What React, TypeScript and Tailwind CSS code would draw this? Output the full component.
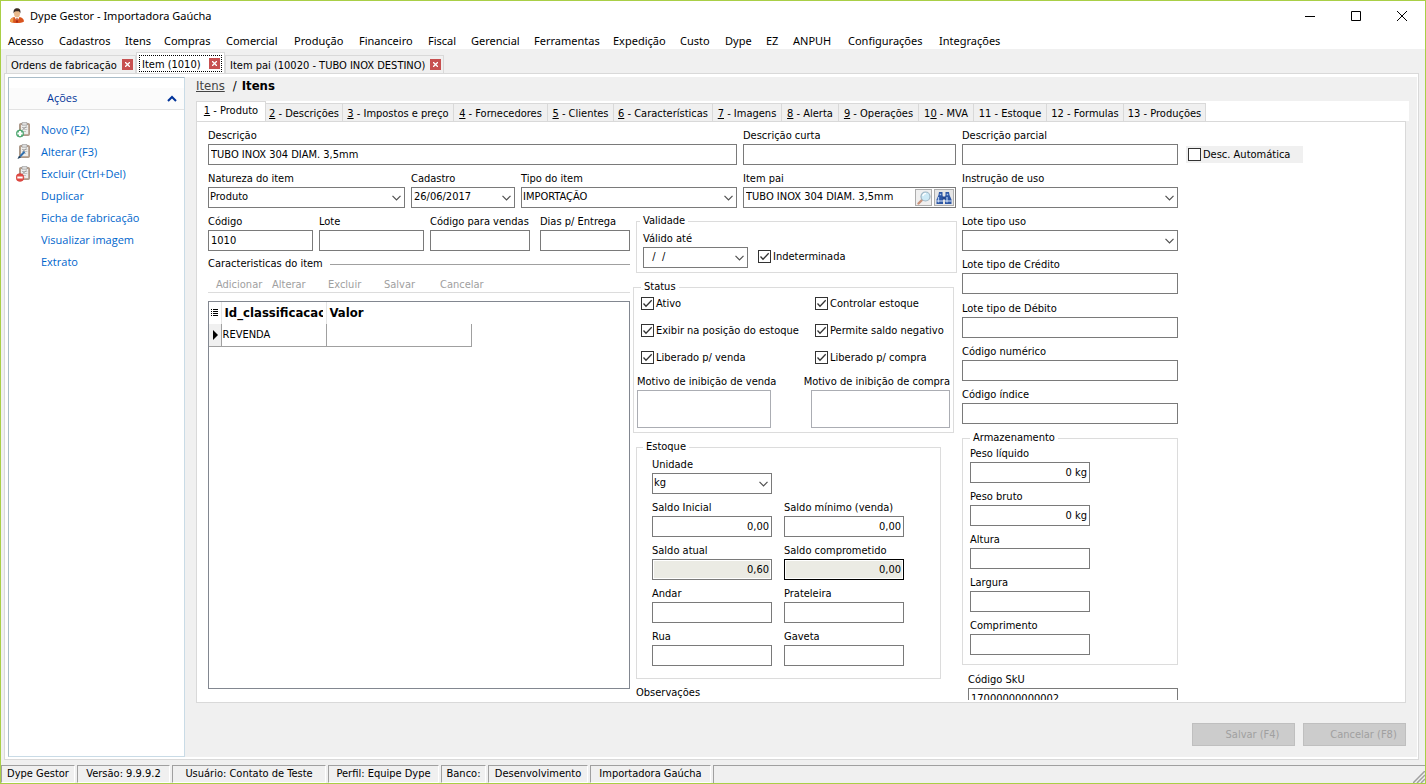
import { useId, type ReactNode } from "react";

const menus = [
  { label: "Acesso", width: "w-[51px]" },
  { label: "Cadastros", width: "w-[66px]" },
  { label: "Itens", width: "w-[39px]" },
  { label: "Compras", width: "w-[62px]" },
  { label: "Comercial", width: "w-[68px]" },
  { label: "Produção", width: "w-[65px]" },
  { label: "Financeiro", width: "w-[69px]" },
  { label: "Fiscal", width: "w-[43px]" },
  { label: "Gerencial", width: "w-[63px]" },
  { label: "Ferramentas", width: "w-[79px]" },
  { label: "Expedição", width: "w-[67px]" },
  { label: "Custo", width: "w-[45px]" },
  { label: "Dype", width: "w-[41px]" },
  { label: "EZ", width: "w-[27px]" },
  { label: "ANPUH", width: "w-[55px]" },
  { label: "Configurações", width: "w-[91px]" },
  { label: "Integrações", width: "w-[80px]" },
];

// pre + key: the underlined accelerator of each tab
const sections = [
  { pre: "", key: "1", rest: " - Produto", width: "w-[70px]" },
  { pre: "", key: "2", rest: " - Descrições", width: "w-[77px]" },
  { pre: "", key: "3", rest: " - Impostos e preço", width: "w-[111px]" },
  { pre: "", key: "4", rest: " - Fornecedores", width: "w-[94px]" },
  { pre: "", key: "5", rest: " - Clientes", width: "w-[66px]" },
  { pre: "", key: "6", rest: " - Características", width: "w-[99px]" },
  { pre: "", key: "7", rest: " - Imagens", width: "w-[69px]" },
  { pre: "", key: "8", rest: " - Alerta", width: "w-[57px]" },
  { pre: "", key: "9", rest: " - Operações", width: "w-[80px]" },
  { pre: "1", key: "0", rest: " - MVA", width: "w-[55px]" },
  { pre: "11", key: "", rest: " - Estoque", width: "w-[73px]" },
  { pre: "12", key: "", rest: " - Formulas", width: "w-[77px]" },
  { pre: "13", key: "", rest: " - Produções", width: "w-[82px]" },
];

const statusCells = [
  { text: "Dype Gestor", width: "w-[74px]" },
  { text: "Versão: 9.9.9.2", width: "w-[93px]" },
  { text: "Usuário: Contato de Teste", width: "w-[154px]" },
  { text: "Perfil: Equipe Dype", width: "w-[111px]" },
  { text: "Banco:", width: "w-[45px]" },
  { text: "Desenvolvimento", width: "w-[100px]" },
  { text: "Importadora Gaúcha", width: "w-[121px]" },
];

function Chevron() {
  return (
    <svg width="9" height="6" viewBox="0 0 9 6" fill="none" stroke="#505050" strokeWidth="1.2">
      <path d="M0.5 0.8 4.5 4.8 8.5 0.8" />
    </svg>
  );
}

function AppIcon() {
  return (
    <svg width="16" height="16" viewBox="0 0 16 16">
      <path d="M1 13.500C1 11 3 9.500 5.500 9L10.500 9C13 9.500 15 11 15 13.500 12 15.500 4 15.500 1 13.500Z" fill="#d9541e" />
      <path d="M1 13.500C1 11.500 2.500 10 4.500 9.500L4 14.800Q2 14.300 1 13.500Z" fill="#f0a04a" />
      <path d="M5.500 9 8 13.500 10.500 9Z" fill="#fff" />
      <path d="M7.500 10h1l.6 4-1.100 1-1.100-1Z" fill="#b02a10" />
      <ellipse cx="8" cy="5.500" rx="3" ry="4" fill="#e9b98c" />
      <path d="M4.700 5.500C4 1.500 6 .2 8.200.2 10.800.2 12 2 11.300 5.500 10.800 3.500 10 3 8 3.200 6 3.200 5.200 3.500 4.700 5.500Z" fill="#3a2a22" />
    </svg>
  );
}

function ClipboardIcon({ kind }: { kind: "add" | "edit" | "remove" }) {
  return (
    <svg width="16" height="16" viewBox="0 0 16 16">
      <rect x="3.500" y="1.500" width="10" height="12" rx="1" fill="#b39c8b" stroke="#a18b7a" strokeWidth=".8" />
      <path d="M5 3h7.200v9.200H5z" fill="#eeeeec" />
      <path d="M6 .6h5v2.600H6z" fill="#e4e4e4" stroke="#9b9b9b" strokeWidth=".7" />
      <path d="M6 5.500h5.300M6 7.500h5.300M6 9.500h4" stroke="#bdbdbd" strokeWidth=".9" />
      <path d="m6.800 5.400 1 1.400 2.700-2.400" stroke="#8a8a8a" strokeWidth=".8" fill="none" />
      {kind === "add" && (
        <>
          <circle cx="4" cy="11.500" r="3.600" fill="#5fb37f" stroke="#3c9a62" strokeWidth=".8" />
          <path d="M4 8.900v5.200M1.400 11.500h5.200" stroke="#fff" strokeWidth="2" />
        </>
      )}
      {kind === "edit" && (
        <>
          <path d="M3 13.500 4.500 10.500 7.800 7 9.300 8.300 5.500 12.500Z" fill="#2f6fae" />
          <path d="M1.500 15 3 11.800 5 13.600Z" fill="#1c3c5c" />
        </>
      )}
      {kind === "remove" && (
        <>
          <circle cx="4" cy="11.500" r="3.900" fill="#e24b44" stroke="#cf3a34" strokeWidth=".5" />
          <path d="M1.300 11.500h5.400" stroke="#fff" strokeWidth="2" />
        </>
      )}
    </svg>
  );
}

function MagnifierIcon() {
  return (
    <svg width="14" height="14" viewBox="0 0 14 14">
      <path d="M1.500 12.500 5 9" stroke="#c9937c" strokeWidth="2.400" strokeLinecap="round" />
      <circle cx="8.500" cy="5.500" r="4.500" fill="#cdeaf6" stroke="#9fb6c4" strokeWidth="1.200" />
      <path d="M5.800 5C6.200 3.200 7.600 2.400 9 2.600" stroke="#fff" strokeWidth="1.200" fill="none" />
    </svg>
  );
}

function BinocularsIcon() {
  return (
    <svg width="16" height="14" viewBox="0 0 16 14">
      <path d="M3 1h3.500v3L7 6v7H.5V8.500L2.500 4Z" fill="#2d57a5" />
      <path d="M13 1H9.500v3L9 6v7h6.500V8.500L13.500 4Z" fill="#2d57a5" />
      <path d="M6.500 5.500h3v3h-3z" fill="#24468c" />
      <path d="M3.700 3.500h1.500M10.700 3.500h1.500M2.500 6v5.500M11 6v5.500" stroke="#a9c6f0" strokeWidth="1.300" />
      <path d="M.5 10h6.500M9 10h6.500" stroke="#dfe9f8" strokeWidth="1" />
    </svg>
  );
}

type FieldProps = {
  label: string;
  width: string;
  value?: string;
  right?: boolean;
  readOnly?: boolean;
  dark?: boolean;
};

function TextField({ label, width, value = "", right, readOnly, dark }: FieldProps) {
  const id = useId();
  return (
    <div className={width}>
      <label htmlFor={id} className="block whitespace-nowrap leading-[16px]">
        {label}
      </label>
      <input
        id={id}
        defaultValue={value}
        readOnly={readOnly}
        className={`block h-[21px] w-full border px-[2px] ${dark ? "border-black" : "border-[#7a7a7a]"} ${
          right ? "text-right" : ""
        } ${readOnly ? "bg-[#ebebe4] shadow-[inset_0_0_0_1px_#fff]" : "bg-white"}`}
      />
    </div>
  );
}

function SelectField({ label, width, value = "" }: FieldProps) {
  const id = useId();
  return (
    <div className={width}>
      <label htmlFor={id} className="block whitespace-nowrap leading-[16px]">
        {label}
      </label>
      <div className="relative">
        <select
          id={id}
          defaultValue={value}
          className="block h-[21px] w-full appearance-none border border-[#7a7a7a] bg-white px-[1px]"
        >
          <option>{value}</option>
        </select>
        <span className="pointer-events-none absolute right-[4px] top-[8px]">
          <Chevron />
        </span>
      </div>
    </div>
  );
}

function DateField({ label, width, value = "" }: FieldProps) {
  const id = useId();
  return (
    <div className={width}>
      <label htmlFor={id} className="block whitespace-nowrap leading-[16px]">
        {label}
      </label>
      <div className="flex h-[21px] items-center border border-[#7a7a7a] bg-white">
        <input id={id} defaultValue={value} className="w-0 flex-1 whitespace-pre px-[2px] outline-none" />
        <button type="button" aria-label="Abrir calendário" className="px-[3px]">
          <Chevron />
        </button>
      </div>
    </div>
  );
}

function Check({ label, checked = false }: { label: string; checked?: boolean }) {
  return (
    <label className="flex h-[13px] items-center gap-[2px] whitespace-nowrap leading-[14px]">
      <span className="relative block size-[13px]">
        <input
          type="checkbox"
          defaultChecked={checked}
          className="peer block size-[13px] appearance-none border border-[#333] bg-white"
        />
        <svg
          viewBox="0 0 13 13"
          className="pointer-events-none absolute inset-0 hidden size-[13px] peer-checked:block"
          fill="none"
          stroke="#333"
          strokeWidth="1.300"
        >
          <path d="M2.500 6.500 5 9.200 10.700 3.300" />
        </svg>
      </span>
      {label}
    </label>
  );
}

function Group({ title, className, children }: { title: string; className: string; children: ReactNode }) {
  return (
    <fieldset className={`border border-[#dcdcdc] ${className}`}>
      <legend className="px-[3px] leading-[14px]">{title}</legend>
      {children}
    </fieldset>
  );
}

function DocumentTab({ label, width, active = false }: { label: string; width: string; active?: boolean }) {
  return (
    <div
      className={`flex border border-b-0 border-[#d9d9d9] ${width} ${
        active ? "h-[21px] bg-white px-[2px] pb-px pt-[2px]" : "h-[18px] bg-[#f0f0f0] px-px"
      }`}
    >
      <div
        className={`flex flex-1 items-center justify-between ${
          active ? "border border-dotted border-black pl-[2px] pr-px" : "pl-[3px] pr-px"
        }`}
      >
        <button type="button" className="whitespace-nowrap pt-[2px] leading-[14px]">
          {label}
        </button>
        <button
          type="button"
          aria-label={`Fechar ${label}`}
          className="flex size-[11px] items-center justify-center bg-[#c75050]"
        >
          <svg width="5" height="5" viewBox="0 0 5 5" stroke="#fff" strokeWidth="1.300">
            <path d="M0 0 5 5M5 0 0 5" />
          </svg>
        </button>
      </div>
    </div>
  );
}

function Sidebar() {
  const actions: { label: string; icon?: "add" | "edit" | "remove" }[] = [
    { label: "Novo (F2)", icon: "add" },
    { label: "Alterar (F3)", icon: "edit" },
    { label: "Excluir (Ctrl+Del)", icon: "remove" },
    { label: "Duplicar" },
    { label: "Ficha de fabricação" },
    { label: "Visualizar imagem" },
    { label: "Extrato" },
  ];
  return (
    <aside className="w-[177px] shrink-0 border border-[#a9bcc8] border-b-[#c9dbe6] border-r-[#c9dbe6] bg-white font-['Open_Sans','Noto_Sans',sans-serif] text-[11px]">
      <button
        type="button"
        className="mt-[10px] flex h-[22px] w-full items-center justify-between border-b border-[#e3e3e3] bg-[#fbfbfb] pl-[38px] pr-[7px] text-[#003399]"
      >
        Ações
        <svg width="10" height="7" viewBox="0 0 10 7" fill="none" stroke="#003399" strokeWidth="2">
          <path d="M1 6 5 2 9 6" />
        </svg>
      </button>
      <ul className="pt-[9px]">
        {actions.map((a) => (
          <li key={a.label}>
            <a href="#" className="flex h-[22px] items-center gap-[9px] pl-[7px] text-[#0066cc]">
              <span className="size-[16px]">{a.icon && <ClipboardIcon kind={a.icon} />}</span>
              {a.label}
            </a>
          </li>
        ))}
      </ul>
    </aside>
  );
}

function Characteristics() {
  return (
    <div>
      <div className="flex items-center gap-[7px] leading-[14px]">
        Caracteristicas do item
        <span className="h-px flex-1 bg-[#a0a0a0]" />
      </div>
      <div className="mt-[6px] flex h-[16px] border-b border-[#dcdcdc] pl-[8px] text-[#a0a0a0]">
        <button type="button" disabled className="w-[56px] text-left">Adicionar</button>
        <button type="button" disabled className="w-[56px] text-left">Alterar</button>
        <button type="button" disabled className="w-[56px] text-left">Excluir</button>
        <button type="button" disabled className="w-[56px] text-left">Salvar</button>
        <button type="button" disabled className="w-[56px] text-left">Cancelar</button>
      </div>
      <div className="mt-[8px] h-[388px] border border-[#828790]">
        <table className="w-[263px] table-fixed border-collapse">
          <thead>
            <tr className="h-[22px] text-left text-[13px]">
              <th className="w-[12px] border-r border-[#e5e5e5]">
                <svg width="8" height="10" viewBox="0 0 8 10" stroke="#000" className="ml-[2px]">
                  <path d="M0 1.500h1M2 1.500h5M0 3.500h1M2 3.500h5M0 5.500h1M2 5.500h5M0 7.500h1M2 7.500h5" />
                </svg>
              </th>
              <th className="w-[105px] border-r border-[#e5e5e5] pl-[3px] pr-[3px]">
                <span className="block overflow-hidden whitespace-nowrap">Id_classificacao</span>
              </th>
              <th className="pl-[3px]">Valor</th>
            </tr>
          </thead>
          <tbody>
            <tr className="h-[22px]">
              <td className="border-b border-r border-[#a0a0a0] bg-[#f0f0f0]">
                <svg width="6" height="10" viewBox="0 0 6 10" className="ml-[4px]">
                  <path d="M0 0 5 5 0 10Z" />
                </svg>
              </td>
              <td className="border-b border-r border-[#a0a0a0] pl-px">REVENDA</td>
              <td className="border-b border-r border-[#a0a0a0]" />
            </tr>
          </tbody>
        </table>
      </div>
    </div>
  );
}

function ItemForm() {
  const pai = useId();
  return (
    <form className="flex items-start gap-[6px] pl-[11px] pt-[6px]">
      <div className="w-[748px] shrink-0">
        <div className="flex gap-[6px]">
          <TextField label="Descrição" width="w-[529px]" value="TUBO INOX 304 DIAM. 3,5mm" />
          <TextField label="Descrição curta" width="w-[213px]" />
        </div>
        <div className="mt-[6px] flex gap-[6px]">
          <SelectField label="Natureza do item" width="w-[197px]" value="Produto" />
          <DateField label="Cadastro" width="w-[104px]" value="26/06/2017" />
          <SelectField label="Tipo do item" width="w-[216px]" value="IMPORTAÇÃO" />
          <div className="w-[213px]">
            <label htmlFor={pai} className="block leading-[16px]">
              Item pai
            </label>
            <div className="flex h-[21px] items-center gap-[2px] border border-[#7a7a7a] bg-white pr-px">
              <input id={pai} defaultValue="TUBO INOX 304 DIAM. 3,5mm" className="w-0 flex-1 pl-[2px] outline-none" />
              <button
                type="button"
                aria-label="Pesquisar"
                className="flex h-[17px] w-[17px] items-center justify-center border border-[#adadad] bg-[#f0f0f0]"
              >
                <MagnifierIcon />
              </button>
              <button
                type="button"
                aria-label="Localizar"
                className="flex h-[17px] w-[20px] items-center justify-center border border-[#adadad] bg-[#e6e6e6]"
              >
                <BinocularsIcon />
              </button>
            </div>
          </div>
        </div>

        <div className="mt-[6px] flex items-start">
          <div className="w-[422px] shrink-0">
            <div className="mb-[6px] flex gap-[6px]">
              <TextField label="Código" width="w-[105px]" value="1010" />
              <TextField label="Lote" width="w-[105px]" />
              <TextField label="Código para vendas" width="w-[104px] pr-[4px]" />
              <TextField label="Dias p/ Entrega" width="w-[90px]" />
            </div>
            <Characteristics />
          </div>

          <div className="flex flex-1 flex-col gap-[7px] pl-[3px]">
            <Group title="Validade" className="ml-[3px] px-[3px] pb-[4px] pt-[3px]">
              <div className="flex items-end gap-[10px] pl-[3px]">
                <DateField label="Válido até" width="w-[105px]" value="  /  /" />
                <div className="pb-[5px]">
                  <Check label="Indeterminada" checked />
                </div>
              </div>
            </Group>

            <Group title="Status" className="mr-[3px] px-[7px] pb-[4px] pt-[3px]">
              <div className="grid grid-cols-[174px_1fr] gap-y-[14px]">
                <Check label="Ativo" checked />
                <Check label="Controlar estoque" checked />
                <Check label="Exibir na posição do estoque" checked />
                <Check label="Permite saldo negativo" checked />
                <Check label="Liberado p/ venda" checked />
                <Check label="Liberado p/ compra" checked />
              </div>
              <div className="-mx-[4px] mt-[10px] flex gap-[40px]">
                <label className="block w-[134px] whitespace-nowrap leading-[16px]">
                  Motivo de inibição de venda
                  <textarea className="block h-[38px] w-full resize-none border border-[#abadb3]" />
                </label>
                <label className="block w-[139px] whitespace-nowrap leading-[16px]">
                  <span className="flex justify-end">Motivo de inibição de compra</span>
                  <textarea className="block h-[38px] w-full resize-none border border-[#abadb3]" />
                </label>
              </div>
            </Group>

            <Group title="Estoque" className="ml-[3px] mr-[16px] px-[6px] pb-[12px] pt-[3px]">
              <div className="grid grid-cols-[120px_120px] gap-x-[12px] gap-y-[6px] pl-[9px]">
                <SelectField label="Unidade" width="w-full" value="kg" />
                <span />
                <TextField label="Saldo Inicial" width="w-full" value="0,00" right />
                <TextField label="Saldo mínimo (venda)" width="w-full" value="0,00" right />
                <TextField label="Saldo atual" width="w-full" value="0,60" right readOnly />
                <TextField label="Saldo comprometido" width="w-full" value="0,00" right readOnly dark />
                <TextField label="Andar" width="w-full" />
                <TextField label="Prateleira" width="w-full" />
                <TextField label="Rua" width="w-full" />
                <TextField label="Gaveta" width="w-full" />
              </div>
            </Group>
            <div className="pl-[3px] leading-[14px]">Observações</div>
          </div>
        </div>
      </div>

      <div className="flex w-[216px] shrink-0 flex-col gap-[7px]">
        <div className="flex flex-col gap-[6px]">
          <TextField label="Descrição parcial" width="w-full" />
          <SelectField label="Instrução de uso" width="w-full" />
          <SelectField label="Lote tipo uso" width="w-full" />
          <TextField label="Lote tipo de Crédito" width="w-full" />
        </div>
        <div className="flex flex-col gap-[6px]">
          <TextField label="Lote tipo de Débito" width="w-full" />
          <TextField label="Código numérico" width="w-full" />
          <TextField label="Código índice" width="w-full" />
        </div>
        <Group title="Armazenamento" className="px-[7px] pb-[9px] pt-px">
          <div className="flex flex-col gap-[6px]">
            <TextField label="Peso líquido" width="w-[120px]" value="0 kg" right />
            <TextField label="Peso bruto" width="w-[120px]" value="0 kg" right />
            <TextField label="Altura" width="w-[120px]" />
            <TextField label="Largura" width="w-[120px]" />
            <TextField label="Comprimento" width="w-[120px]" />
          </div>
        </Group>
        <div className="pl-[6px]">
          <TextField label="Código SkU" width="w-full" value="17000000000002" />
        </div>
      </div>

      <div className="ml-[2px] mt-[18px] h-[17px] w-[117px] bg-[#f0f0f0] pl-[2px] pt-[2px]">
        <Check label="Desc. Automática" />
      </div>
    </form>
  );
}

export default function App() {
  return (
    <div className="flex h-screen flex-col overflow-hidden border border-[#a9cf46] bg-[#f0f0f0] font-['DejaVu_Sans_Condensed','DejaVu_Sans',sans-serif] text-[11px] text-black">
      <header className="bg-white font-['Noto_Sans','Open_Sans',sans-serif] text-[11px]">
        <div className="flex h-[30px] items-center pl-[8px]">
          <AppIcon />
          <h1 className="ml-[5px] flex-1">Dype Gestor - Importadora Gaúcha</h1>
          <button type="button" aria-label="Minimizar" className="flex w-[46px] justify-center">
            <svg width="10" height="10" stroke="#000">
              <path d="M0 5.500h10" />
            </svg>
          </button>
          <button type="button" aria-label="Maximizar" className="flex w-[46px] justify-center">
            <svg width="10" height="10" fill="none" stroke="#000">
              <path d="M.5.500h9v9h-9z" />
            </svg>
          </button>
          <button type="button" aria-label="Fechar" className="flex w-[46px] justify-center">
            <svg width="10" height="10" stroke="#000">
              <path d="M0 0 10 10M10 0 0 10" />
            </svg>
          </button>
        </div>
        <nav className="flex h-[18px] items-end pl-[7px]">
          {menus.map((m) => (
            <button key={m.label} type="button" className={`whitespace-nowrap text-left ${m.width}`}>
              {m.label}
            </button>
          ))}
        </nav>
      </header>

      <div className="flex h-[24px] items-end pl-[5px]">
        <DocumentTab label="Ordens de fabricação" width="w-[130px]" />
        <DocumentTab label="Item (1010)" width="w-[89px]" active />
        <DocumentTab label="Item pai (10020 - TUBO INOX DESTINO)" width="w-[219px]" />
      </div>

      <div className="ml-[3px] mr-[6px] flex min-h-0 flex-1 border border-[#d9d9d9] bg-white pb-[2px] pl-[3px] pr-px pt-[3px]">
        <Sidebar />
        <main className="flex min-w-0 flex-1 flex-col bg-[#f0f0f0] pl-[11px] pr-[8px]">
          <div className="flex h-[24px] items-start gap-[5px] text-[13px] leading-[18px]">
            <a href="#" className="pr-[3px] text-[#444] underline">
              Itens
            </a>
            <span>/</span>
            <strong>Itens</strong>
          </div>
          <div role="tablist" className="flex h-[20px] items-end bg-white">
            {sections.map((s, i) => (
              <button
                key={s.rest}
                type="button"
                role="tab"
                aria-selected={i === 0}
                className={`whitespace-nowrap border-t border-r border-[#d9d9d9] ${s.width} ${
                  i === 0 ? "h-[20px] border-l bg-white" : "h-[18px] bg-[#f0f0f0] pt-[2px]"
                }`}
              >
                {s.pre}
                <u>{s.key}</u>
                {s.rest}
              </button>
            ))}
          </div>
          <div className="mr-[3px] flex min-h-0 flex-1 flex-col border border-[#d9d9d9] bg-white pb-[2px]">
            <div className="min-h-0 flex-1 overflow-hidden">
              <ItemForm />
            </div>
          </div>
          <footer className="mr-[3px] flex h-[54px] items-start justify-end gap-[8px] pt-[20px] text-[#a0a0a0] [text-shadow:1px_1px_#fff]">
            <button type="button" disabled className="h-[23px] w-[103px] border border-[#bfbfbf] bg-[#ccc] pl-[18px] pt-[2px]">
              Salvar (F4)
            </button>
            <button type="button" disabled className="h-[23px] w-[103px] border border-[#bfbfbf] bg-[#ccc] pl-[18px] pt-[2px]">
              Cancelar (F8)
            </button>
          </footer>
        </main>
      </div>

      <div className="mt-[5px] flex h-[18px] gap-[2px]">
        {statusCells.map((c) => (
          <div
            key={c.text}
            className={`flex items-center justify-center whitespace-nowrap border border-b-white border-l-[#a0a0a0] border-r-white border-t-[#a0a0a0] ${c.width}`}
          >
            {c.text}
          </div>
        ))}
        <div className="flex flex-1 items-end justify-end border-l border-t border-[#a0a0a0]">
          <svg width="12" height="12" stroke="#a0a0a0" strokeWidth="1.500">
            <path d="M0 12 12 0M4 12 12 4M8 12 12 8" />
          </svg>
        </div>
      </div>
    </div>
  );
}
